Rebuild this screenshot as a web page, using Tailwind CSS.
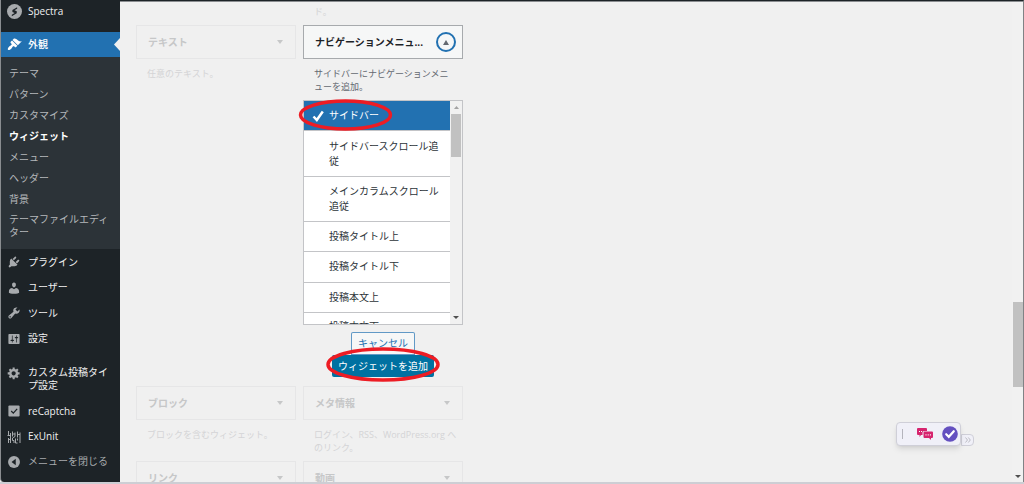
<!DOCTYPE html>
<html lang="ja">
<head>
<meta charset="utf-8">
<meta name="viewport" content="width=device-width, initial-scale=1">
<title>ウィジェット</title>
<script src="https://cdn.jsdelivr.net/npm/@tailwindcss/browser@4"></script>
</head>
<body class="relative flex h-screen flex-col overflow-hidden bg-[#f0f0f0] font-['Open_Sans','Noto_Sans_CJK_JP',sans-serif] text-[10px] leading-[13px] text-[#3c434a]">
<div class="flex min-h-0 flex-1">
  <nav aria-label="メインメニュー" class="w-[120px] shrink-0 overflow-hidden rounded-bl border-l border-[#8a8d90] bg-[#1d2327] text-[#f0f0f1]">
    <a href="#" class="flex h-[22px] items-center gap-[6px] pl-[6px]">
      <svg class="size-[15px]" viewBox="0 0 20 20"><circle cx="10" cy="10" r="10" fill="#a7aaad"/><path d="M13.5 4.2 7.2 8v2.6l3 1.5-3.8 2.1v2L13 12.400V9.800L9.900 8.300l3.600-2z" fill="#1d2327"/></svg>
      Spectra</a>
    <a href="#" class="relative mt-[10px] flex h-[25px] items-center gap-[6px] bg-[#2271b1] pl-[6px] font-medium text-white">
      <svg class="size-[15px]" viewBox="0 0 20 20" fill="#fff"><path d="M14.48 11.06L7.41 3.99l1.5-1.5c.5-.56 2.3-.47 3.51.32 1.21.8 1.43 1.28 2.91 2.1 1.18.64 2.45 1.26 4.45.85zm-.71.71L6.7 4.7 4.93 6.47c-.39.39-.39 1.02 0 1.41l1.06 1.06c.39.39.39 1.03 0 1.42-.6.6-1.43 1.11-2.21 1.69-.35.26-.7.53-1.01.84C1.43 14.23.4 16.08 1.4 17.07c.99 1 2.84-.03 4.18-1.36.31-.31.58-.66.85-1.02.57-.78 1.08-1.61 1.69-2.21.39-.39 1.02-.39 1.41 0l1.06 1.06c.39.39 1.02.39 1.41 0z"/></svg>
      外観
      <svg class="absolute top-[6px] right-0 h-[13px] w-[6px]" viewBox="0 0 6 13"><path d="M6 0v13L0 6.500z" fill="#f0f0f0"/></svg>
    </a>
    <div class="flex flex-col bg-[#2c3338] pt-[6px] pb-[6px] pl-2 text-[#b5b8bb]">
      <a href="#" class="py-1">テーマ</a>
      <a href="#" class="py-1">パターン</a>
      <a href="#" class="py-1">カスタマイズ</a>
      <a href="#" aria-current="page" class="py-1 font-bold text-white">ウィジェット</a>
      <a href="#" class="py-1">メニュー</a>
      <a href="#" class="py-1">ヘッダー</a>
      <a href="#" class="py-1">背景</a>
      <a href="#" class="pt-[3px] pb-1">テーマファイルエディ<br>ター</a>
    </div>
    <a href="#" class="flex items-center gap-[7px] py-[6px] pl-[6px]">
      <svg class="size-[14px]" viewBox="0 0 20 20" fill="#a7aaad"><path d="M13.11 4.36L9.87 7.6 8 5.73l3.24-3.24c.35-.34 1.05-.2 1.56.32.52.51.66 1.21.31 1.55zm-8 1.77l.91-1.12 9.01 9.01-1.19.84c-.71.71-2.63 1.16-3.82 1.16H6.14L4.9 17.26c-.59.59-1.54.59-2.12 0-.59-.58-.59-1.53 0-2.12l1.24-1.24v-3.88c0-1.13.4-3.19 1.09-3.89zm7.26 3.97l3.24-3.24c.34-.35 1.04-.21 1.55.31.52.51.66 1.21.31 1.55l-3.24 3.25z"/></svg>
      プラグイン</a>
    <a href="#" class="flex h-[25px] items-center gap-[7px] pl-[6px]">
      <svg class="size-[14px]" viewBox="0 0 20 20" fill="#a7aaad"><path d="M10 9.25c-2.27 0-2.73-3.44-2.73-3.44C7 4.02 7.82 2 9.97 2c2.16 0 2.98 2.02 2.71 3.81 0 0-.41 3.44-2.68 3.44zm0 2.57L12.72 10c2.39 0 4.52 2.33 4.52 4.53v2.49s-3.65 1.13-7.24 1.13c-3.65 0-7.24-1.13-7.24-1.13v-2.49c0-2.25 1.94-4.48 4.47-4.48z"/></svg>
      ユーザー</a>
    <a href="#" class="flex h-[26px] items-center gap-[7px] pl-[6px]">
      <svg class="size-[14px]" viewBox="0 0 20 20" fill="#a7aaad"><path d="M16.68 9.77c-1.34 1.34-3.3 1.67-4.95.99l-5.41 6.52c-.99.99-2.59.99-3.58 0s-.99-2.59 0-3.57l6.52-5.42c-.68-1.65-.35-3.61.99-4.95 1.28-1.28 3.12-1.62 4.72-1.06l-2.89 2.89 2.82 2.82 2.86-2.87c.53 1.58.18 3.39-1.08 4.65zM3.81 16.21c.4.39 1.04.39 1.43 0 .4-.4.4-1.04 0-1.43-.39-.4-1.03-.4-1.43 0-.39.39-.39 1.03 0 1.43z"/></svg>
      ツール</a>
    <a href="#" class="flex h-[25px] items-center gap-[7px] pl-[6px]">
      <svg class="size-[14px]" viewBox="0 0 20 20" fill="#a7aaad"><path d="M18 16V4c0-.55-.45-1-1-1H3c-.55 0-1 .45-1 1v12c0 .55.45 1 1 1h14c.55 0 1-.45 1-1zM8 11h1c.55 0 1 .45 1 1s-.45 1-1 1H8v1.5c0 .28-.22.5-.5.5s-.5-.22-.5-.5V13H6c-.55 0-1-.45-1-1s.45-1 1-1h1V5.500c0-.28.22-.5.5-.5s.5.22.5.5V11zm5-2h-1c-.55 0-1-.45-1-1s.45-1 1-1h1V5.500c0-.28.22-.5.5-.5s.5.22.5.5V7h1c.55 0 1 .45 1 1s-.45 1-1 1h-1v5.500c0 .28-.22.5-.5.5s-.5-.22-.5-.5V9z"/></svg>
      設定</a>
    <a href="#" class="mt-[9px] flex gap-[7px] py-[6px] pl-[6px]">
      <svg class="size-[14px]" viewBox="0 0 20 20" fill="#a7aaad"><path d="M18 12h-2.18c-.17.7-.44 1.35-.81 1.93l1.54 1.54-2.1 2.1-1.54-1.54c-.58.36-1.23.63-1.91.79V19H8v-2.18c-.68-.16-1.33-.43-1.91-.79l-1.54 1.54-2.12-2.12 1.54-1.54c-.36-.58-.63-1.23-.79-1.91H1V9.03h2.17c.16-.7.44-1.35.8-1.94L2.43 5.55l2.1-2.1 1.54 1.54c.58-.37 1.24-.64 1.93-.81V2h3v2.18c.68.16 1.33.43 1.91.79l1.54-1.54 2.12 2.12-1.54 1.54c.36.59.64 1.24.8 1.94H18V12zm-8.5 1.5c1.66 0 3-1.34 3-3s-1.34-3-3-3-3 1.34-3 3 1.34 3 3 3z"/></svg>
      <span>カスタム投稿タイ<br>プ設定</span></a>
    <a href="#" class="flex h-[26px] items-center gap-[7px] pl-[6px]">
      <svg class="size-[14px]" viewBox="0 0 20 20"><rect x="2" y="2" width="16" height="16" rx="1.500" fill="#a7aaad"/><path d="m6 10 3 3 5.500-6" fill="none" stroke="#1d2327" stroke-width="1.800"/></svg>
      reCaptcha</a>
    <a href="#" class="flex h-[25px] items-center gap-[7px] pl-[6px]">
      <svg class="size-[14px]" viewBox="0 0 14 14" fill="none" stroke="#a7aaad" stroke-width="1"><path d="M1.500 1v5M.5 5.500h3M3.500 3v10M1.500 8v5M5.500 1.500v5M5.500 4H8M8 2.500v4M10.500 1.500v6M10 4.500h3M13 2.500v10.500M5.500 8v2.500h1.500V13M8.500 8.500v4.500H10.500M8 6.500 5.500 8M10.500 8.500v2M1 9.500h2.500"/></svg>
      ExUnit</a>
    <button type="button" class="flex h-[25px] items-center gap-[7px] pl-[6px] text-[#a7aaad]">
      <svg class="size-[14px]" viewBox="0 0 20 20"><circle cx="10" cy="10" r="8.500" fill="#a7aaad"/><path d="M12.500 5.500v9L6.500 10z" fill="#1d2327"/></svg>
      メニューを閉じる</button>
  </nav>

  <main class="min-w-0 flex-1 overflow-hidden border-t border-[#1d2327]">
    <div class="border-t border-[#8a8d90] pl-4">
    <div class="grid w-[327px] grid-cols-2 gap-x-[7px] text-[9px]">
      <p class="col-start-2 h-[23px] pt-[3px] pl-[11px] text-[#d4d4d6]">ド。</p>

      <section class="h-[361px] text-[#d4d4d6]">
        <h3><button type="button" class="flex h-[34px] w-full items-center justify-between border border-[#e6e6e7] pr-[12px] pl-[11px] text-[10px] font-bold text-[#c6c7c8]">テキスト
          <svg class="h-[4px] w-[6px]" viewBox="0 0 6 4"><path d="M0 0h6L3 4z" fill="#c6c7c8"/></svg></button></h3>
        <p class="pt-2 pl-[11px]">任意のテキスト。</p>
      </section>

      <section class="h-[361px]">
        <h3><button type="button" aria-expanded="true" class="flex h-[34px] w-full items-center justify-between border border-[#a7aaad] bg-[#f6f7f7] pr-[6px] pl-[11px] text-[10px] font-bold text-[#1d2327]">ナビゲーションメニュ...
          <span class="flex size-5 items-center justify-center rounded-full border-2 border-[#2271b1]"><svg class="h-[5px] w-[6px]" viewBox="0 0 6 5"><path d="M0 5h6L3 0z" fill="#646970"/></svg></span></button></h3>
        <p class="pt-2 pl-[11px] text-[#646970]">サイドバーにナビゲーションメニ<br>ューを追加。</p>
        <div class="relative mt-[7px]">
        <div class="flex h-[225px] overflow-hidden border border-[#c3c4c7] bg-white text-[10px] leading-[15px] text-[#2c3338]">
          <ul class="min-w-0 flex-1">
            <li><button type="button" aria-pressed="true" class="flex w-full items-center gap-[4px] bg-[#2271b1] py-[7px] pl-2 text-left text-white"><svg class="h-[12px] w-[13px]" viewBox="0 0 13 12"><path d="m1.500 6.500 3.300 3.500 6-8.500" fill="none" stroke="#fff" stroke-width="2.500"/></svg>サイドバー</button></li>
            <li><button type="button" class="w-full border-t border-[#c3c4c7] pt-2 pb-[7px] pl-[25px] text-left">サイドバースクロール追<br>従</button></li>
            <li><button type="button" class="w-full border-t border-[#c3c4c7] py-[7px] pl-[25px] text-left">メインカラムスクロール<br>追従</button></li>
            <li><button type="button" class="w-full border-t border-[#c3c4c7] py-[7px] pl-[25px] text-left">投稿タイトル上</button></li>
            <li><button type="button" class="w-full border-t border-[#c3c4c7] pt-[7px] pb-2 pl-[25px] text-left">投稿タイトル下</button></li>
            <li><button type="button" class="w-full border-t border-[#c3c4c7] py-[7px] pl-[25px] text-left">投稿本文上</button></li>
            <li><button type="button" class="w-full border-t border-[#c3c4c7] py-[6px] pl-[25px] text-left">投稿本文下</button></li>
          </ul>
          <div aria-hidden="true" class="flex w-3 flex-col items-center bg-[#f1f1f1] pt-[5px] pb-[5px]">
            <svg class="h-[3px] w-[5px]" viewBox="0 0 5 3"><path d="M0 3h5L2.500 0z" fill="#a3a3a3"/></svg>
            <span class="mt-[5px] h-[43px] w-[10px] bg-[#c1c1c1]"></span>
            <svg class="mt-auto h-[3px] w-[6px]" viewBox="0 0 6 3"><path d="M0 0h6L3 3z" fill="#505050"/></svg>
          </div>
        </div>
        <svg class="pointer-events-none absolute top-[-1px] left-[-5px] h-8 w-[95px]" viewBox="0 0 95 32"><ellipse cx="47.500" cy="16" rx="45" ry="14" fill="none" stroke="#ed1c24" stroke-width="3.500"/></svg>
        </div>
        <div class="mt-[7px] flex flex-col items-center text-[10px] leading-[15px]">
          <button type="button" class="h-[23px] rounded-t-xs border border-[#2271b1]/70 bg-[#f6f7f7] px-[6px] text-[#2271b1]">キャンセル</button>
          <div class="relative">
            <button type="button" class="h-[22px] rounded-xs bg-[#0071a1] px-[6px] text-white">ウィジェットを追加</button>
            <svg class="pointer-events-none absolute top-[-8px] left-[-6px] h-[35px] w-[114px]" viewBox="0 0 114 35"><ellipse cx="57" cy="17.500" rx="55" ry="15.500" fill="none" stroke="#ed1c24" stroke-width="3.500"/></svg>
          </div>
        </div>
      </section>

      <section class="h-[75px] text-[#d4d4d6]">
        <h3><button type="button" class="flex h-[34px] w-full items-center justify-between border border-[#e6e6e7] pr-[12px] pl-[11px] text-[10px] font-bold text-[#c6c7c8]">ブロック
          <svg class="h-[4px] w-[6px]" viewBox="0 0 6 4"><path d="M0 0h6L3 4z" fill="#c6c7c8"/></svg></button></h3>
        <p class="pt-2 pl-[11px]">ブロックを含むウィジェット。</p>
      </section>
      <section class="h-[75px] text-[#d4d4d6]">
        <h3><button type="button" class="flex h-[34px] w-full items-center justify-between border border-[#e6e6e7] pr-[12px] pl-[11px] text-[10px] font-bold text-[#c6c7c8]">メタ情報
          <svg class="h-[4px] w-[6px]" viewBox="0 0 6 4"><path d="M0 0h6L3 4z" fill="#c6c7c8"/></svg></button></h3>
        <p class="pt-2 pl-[11px]">ログイン、RSS、WordPress.org へ<br>のリンク。</p>
      </section>
      <section>
        <h3><button type="button" class="flex h-[34px] w-full items-center justify-between border border-[#e6e6e7] pr-[12px] pl-[11px] text-[10px] font-bold text-[#c6c7c8]">リンク
          <svg class="h-[4px] w-[6px]" viewBox="0 0 6 4"><path d="M0 0h6L3 4z" fill="#c6c7c8"/></svg></button></h3>
      </section>
      <section>
        <h3><button type="button" class="flex h-[34px] w-full items-center justify-between border border-[#e6e6e7] pr-[12px] pl-[11px] text-[10px] font-bold text-[#c6c7c8]">動画
          <svg class="h-[4px] w-[6px]" viewBox="0 0 6 4"><path d="M0 0h6L3 4z" fill="#c6c7c8"/></svg></button></h3>
      </section>
    </div>
    </div>
  </main>

  <div aria-hidden="true" class="flex w-3 shrink-0 flex-col items-center border-t border-r border-t-[#1d2327] border-r-[#808285] bg-[#f1f1f1] pb-1">
    <span class="h-px w-full bg-[#8a8d90]"></span>
    <span class="mt-[300px] h-[85px] w-[10px] bg-[#c1c1c1]"></span>
    <svg class="mt-auto h-[3px] w-[6px]" viewBox="0 0 6 3"><path d="M0 0h6L3 3z" fill="#505050"/></svg>
  </div>
</div>
<div class="h-[2px] shrink-0 bg-[#cdced4]"></div>

<!-- Floating toolbar -->
<div class="absolute right-[50px] bottom-[38px] flex items-end">
  <div class="z-10 flex h-6 w-[65px] items-center rounded border border-[#cfcfd8] bg-[#f0f0f8] pl-[5px] shadow-md">
    <span class="h-[10px] w-px bg-[#b4b4bc]"></span>
    <button type="button" aria-label="チャット" class="ml-[14px]"><svg class="block h-3 w-4" viewBox="0 0 16 12"><path d="M1 0h8q1 0 1 1v2H7Q5.500 3 5.500 4.500V7H4L2.500 9V7H1Q0 7 0 6V1Q0 0 1 0z" fill="#d6246e"/><path d="M7.500 3.500H15q1 0 1 1V9q0 1-1 1h-1v2l-2-2H7.500q-1 0-1-1V4.500q0-1 1-1z" fill="#d6246e"/><path d="M2 3.500h1M4 3.500h1M8.500 6.800h1M10.700 6.800h1M12.900 6.800h1" stroke="#fff" stroke-width="1.200"/></svg></button>
    <button type="button" aria-label="チェック" class="ml-[9px]"><svg class="block size-4" viewBox="0 0 16 16"><circle cx="8" cy="8" r="7.800" fill="#6450c0"/><path d="m4.200 8.200 2.600 2.600 5-5.600" fill="none" stroke="#fff" stroke-width="2.200" stroke-linecap="round"/></svg></button>
  </div>
  <button type="button" aria-label="展開" class="flex h-3 w-[13px] items-center justify-center rounded-r border border-[#cfcfd8] bg-[#f0f0f8]"><svg class="h-[6px] w-[6px]" viewBox="0 0 6 6"><path d="m.500.500 2 2.500-2 2.500M3.300.500l2 2.500-2 2.500" fill="none" stroke="#b4b4bc" stroke-width=".9"/></svg></button>
</div>
</body>
</html>
